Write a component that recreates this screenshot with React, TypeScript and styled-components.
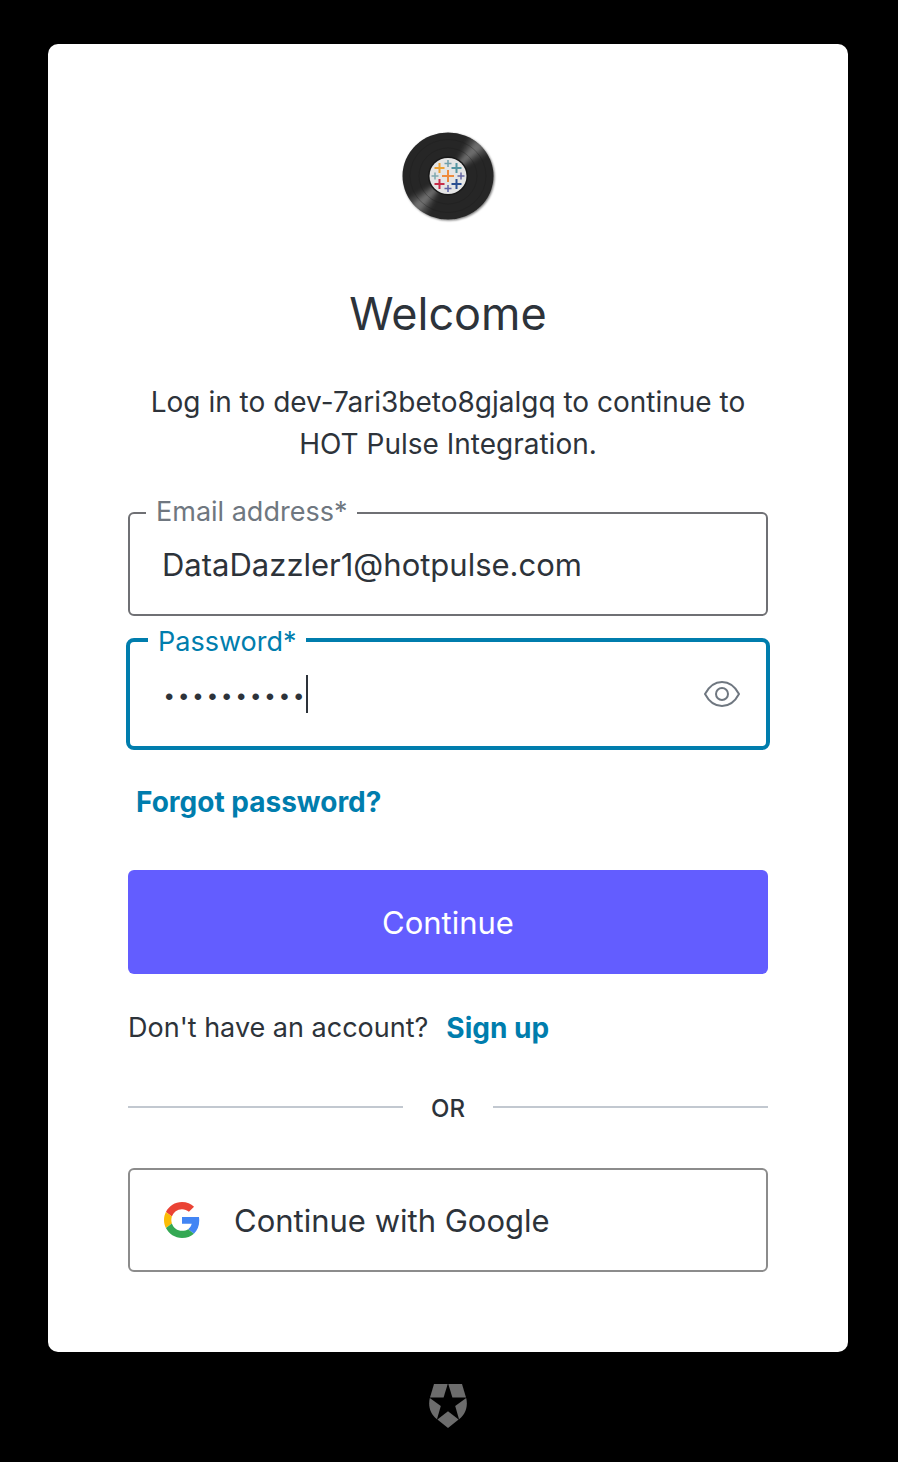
import React, { useState } from "react";
import styled, { createGlobalStyle } from "styled-components";

const ink = "#2d333a";
const blue = "#007dad";

const GlobalStyle = createGlobalStyle`
  *, *::before, *::after { box-sizing: border-box; }
  html { background: #000; }
  body {
    margin: 0;
    color: ${ink};
    font-family: Inter, "Liberation Sans", sans-serif;
    font-size: 27px;
    line-height: 42px;
  }
  button, input { font-family: inherit; color: inherit; }
`;

const Page = styled.main`
  display: flex;
  flex-direction: column;
  align-items: center;
  min-height: 100vh;
  padding: 44px 50px 32px 48px;
  background: #000;
`;

const Card = styled.section`
  width: 100%;
  max-width: 800px;
  padding: 80px;
  border-radius: 10px;
  background: #fff;
`;

const Header = styled.header`
  display: flex;
  flex-direction: column;
  align-items: center;
  text-align: center;
`;

const Title = styled.h1`
  margin: 48px 0 29px;
  font-size: 45px;
  line-height: 76px;
  font-weight: 400;
`;

const Intro = styled.p`
  margin: 0;
  font-size: 28px;
`;

const Form = styled.form`
  margin-top: 47px;
`;

const Field = styled.div<{ $active?: boolean }>`
  position: relative;
  display: flex;
  align-items: center;
  height: ${(p) => (p.$active ? 112 : 104)}px;
  margin: ${(p) => (p.$active ? "22px -2px 0" : "0")};
  padding: 0 ${(p) => (p.$active ? 26 : 32)}px 0 32px;
  border: ${(p) => (p.$active ? `4px solid ${blue}` : "2px solid #6f7074")};
  border-radius: ${(p) => (p.$active ? 8 : 6)}px;
`;

const FieldLabel = styled.label<{ $active?: boolean }>`
  position: absolute;
  top: ${(p) => (p.$active ? -21 : -23)}px;
  left: ${(p) => (p.$active ? 18 : 16)}px;
  padding: 0 10px;
  background: #fff;
  color: ${(p) => (p.$active ? blue : "#6f7780")};
`;

const Input = styled.input`
  flex: 1;
  min-width: 0;
  height: 48px;
  padding: 0;
  border: 0;
  outline: 0;
  background: transparent;
  font-size: 31px;
  caret-color: transparent;

  &[type="password"] {
    padding-top: 8px;
    font-family: "Liberation Mono", monospace;
    font-size: 24px;
  }
`;

const Caret = styled.span`
  position: absolute;
  left: 176px;
  top: 33px;
  width: 2px;
  height: 38px;
  background: ${ink};
`;

const IconButton = styled.button`
  display: flex;
  padding: 0;
  border: 0;
  background: none;
  cursor: pointer;
`;

const TextLink = styled.a`
  color: ${blue};
  font-size: 28px;
  font-weight: 700;
  text-decoration: none;
`;

const Forgot = styled.p`
  display: flex;
  margin: 31px 8px 47px;
`;

const Submit = styled.button`
  width: 100%;
  height: 104px;
  padding: 0;
  border: 0;
  border-radius: 6px;
  background: #635dff;
  color: #fff;
  font-size: 31px;
  cursor: pointer;
`;

const SignUp = styled.p`
  display: flex;
  gap: 18px;
  margin: 33px 0 0;
`;

const Divider = styled.div`
  display: flex;
  align-items: center;
  gap: 28px;
  margin: 40px 0 43px;
  font-size: 24px;
  line-height: 36px;
  font-weight: 500;

  &::before,
  &::after {
    content: "";
    flex: 1;
    height: 2px;
    background: #c2c8d0;
  }
`;

const DividerText = styled.span`
  margin: 2px 0 -2px;
`;

const SocialButton = styled.button`
  display: flex;
  align-items: center;
  gap: 34px;
  width: 100%;
  height: 104px;
  padding: 0 34px;
  border: 2px solid #8c8c8c;
  border-radius: 6px;
  background: #fff;
  font-size: 31px;
  cursor: pointer;
`;

const Badge = styled.a`
  display: flex;
  margin-top: 32px;
`;

const pluses: [number, number, number, number, string][] = [
  [52, 52, 6, 2, "#ee8a3c"],
  [43.5, 44, 5, 2, "#eda135"],
  [60.5, 44, 5, 2, "#5595a2"],
  [43.5, 60, 5, 2, "#c72d49"],
  [60.5, 60, 5, 2, "#2b4f91"],
  [52, 39.5, 3.5, 1.5, "#6f9fac"],
  [39, 52, 3.5, 1.5, "#7fa8b0"],
  [65, 52, 3.5, 1.5, "#6568a3"],
  [52, 64.5, 3.5, 1.5, "#5f64a6"],
];

function RecordLogo() {
  return (
    <svg width="104" height="104" viewBox="0 0 104 104" role="img" aria-label="HOT Pulse">
      <defs>
        <filter id="drop" x="-10%" y="-10%" width="120%" height="120%">
          <feDropShadow dx="1" dy="1" stdDeviation="1" floodOpacity="0.55" />
        </filter>
        <filter id="soft" x="-20%" y="-20%" width="140%" height="140%">
          <feGaussianBlur stdDeviation="2" />
        </filter>
        <clipPath id="disc">
          <ellipse cx="52" cy="52" rx="45.5" ry="43.5" />
        </clipPath>
      </defs>
      <ellipse cx="52" cy="52" rx="45.5" ry="43.5" fill="#262626" filter="url(#drop)" />
      <g clipPath="url(#disc)">
        <g filter="url(#soft)" fill="#999">
          <path d="M52 52L76 10L94 28ZM52 52L28 94L10 76Z" opacity="0.25" />
          <path d="M52 52L81 15L89 23ZM52 52L23 89L15 81Z" opacity="0.5" />
        </g>
      </g>
      <g fill="none" stroke="#1b1b1b" strokeWidth="0.5" opacity="0.6">
        <ellipse cx="52" cy="52" rx="38" ry="36.5" />
        <ellipse cx="52" cy="52" rx="29" ry="28" />
      </g>
      <ellipse cx="52" cy="52" rx="20" ry="19.5" fill="#181818" />
      <ellipse cx="52" cy="52" rx="18.5" ry="18" fill="#e5e5e5" />
      {pluses.map(([x, y, r, w, color]) => (
        <path key={`${x}-${y}`} d={`M${x - r} ${y}h${2 * r}M${x} ${y - r}v${2 * r}`} stroke={color} strokeWidth={w} />
      ))}
    </svg>
  );
}

function EyeIcon() {
  return (
    <svg width="36" height="26" viewBox="0 0 36 26" fill="none" stroke="#6f7780" strokeWidth="2" aria-hidden="true">
      <path d="M1 13C5 5.500 11 1 18 1s13 4.500 17 12C31 20.500 25 25 18 25S5 20.500 1 13Z" strokeLinejoin="round" />
      <circle cx="18" cy="13" r="6" />
    </svg>
  );
}

function GoogleIcon() {
  return (
    <svg width="36" height="36" viewBox="0 0 48 48" aria-hidden="true">
      <path fill="#ea4335" d="M24 9.500c3.540 0 6.710 1.220 9.210 3.600l6.850-6.850C35.900 2.380 30.470 0 24 0 14.620 0 6.510 5.380 2.560 13.220l7.980 6.190C12.430 13.720 17.740 9.500 24 9.500z" />
      <path fill="#4285f4" d="M46.980 24.550c0-1.570-.15-3.090-.38-4.550H24v9.020h12.940c-.58 2.960-2.260 5.480-4.780 7.180l7.730 6c4.510-4.180 7.090-10.360 7.090-17.650z" />
      <path fill="#fbbc05" d="M10.530 28.590c-.48-1.450-.76-2.990-.76-4.590s.27-3.140.76-4.590l-7.980-6.190C.92 16.460 0 20.120 0 24c0 3.880.92 7.540 2.560 10.780l7.970-6.190z" />
      <path fill="#34a853" d="M24 48c6.480 0 11.930-2.130 15.890-5.810l-7.730-6c-2.150 1.450-4.920 2.300-8.160 2.300-6.260 0-11.570-4.220-13.470-9.910l-7.980 6.190C6.510 42.620 14.620 48 24 48z" />
    </svg>
  );
}

function ShieldStar() {
  return (
    <svg width="38" height="44" viewBox="0 0 38 44" fill="#6c6c6c" aria-hidden="true">
      <path d="M5 0H18.700L14.600 13.400H1Z" />
      <path d="M19.300 0H33L37 13.400H23.400Z" />
      <path d="M0.800 14L11.800 22L8 35.200C1.500 30 -1.200 22.500 0.800 14Z" />
      <path d="M37.200 14L26.200 22L30 35.200C36.500 30 39.200 22.500 37.200 14Z" />
      <path d="M19 27.200L29.600 35.500L19 44L8.400 35.500Z" />
    </svg>
  );
}

export default function App() {
  const [email, setEmail] = useState("DataDazzler1@hotpulse.com");
  const [password, setPassword] = useState("dazzling10");
  const [visible, setVisible] = useState(false);

  return (
    <>
      <GlobalStyle />
      <Page>
        <Card>
          <Header>
            <RecordLogo />
            <Title>Welcome</Title>
            <Intro>Log in to dev-7ari3beto8gjalgq to continue to HOT Pulse Integration.</Intro>
          </Header>
          <Form onSubmit={(e) => e.preventDefault()}>
            <Field>
              <FieldLabel htmlFor="email">Email address*</FieldLabel>
              <Input id="email" type="email" value={email} onChange={(e) => setEmail(e.target.value)} />
            </Field>
            <Field $active>
              <FieldLabel $active htmlFor="password">Password*</FieldLabel>
              <Input
                id="password"
                type={visible ? "text" : "password"}
                value={password}
                onChange={(e) => setPassword(e.target.value)}
              />
              <Caret />
              <IconButton type="button" aria-label="Show password" onClick={() => setVisible(!visible)}>
                <EyeIcon />
              </IconButton>
            </Field>
            <Forgot>
              <TextLink href="#forgot">Forgot password?</TextLink>
            </Forgot>
            <Submit type="submit">Continue</Submit>
          </Form>
          <SignUp>
            <span>Don't have an account?</span>
            <TextLink href="#signup">Sign up</TextLink>
          </SignUp>
          <Divider>
            <DividerText>OR</DividerText>
          </Divider>
          <SocialButton type="button">
            <GoogleIcon />
            <span>Continue with Google</span>
          </SocialButton>
        </Card>
        <Badge href="#auth0" aria-label="Auth0">
          <ShieldStar />
        </Badge>
      </Page>
    </>
  );
}
